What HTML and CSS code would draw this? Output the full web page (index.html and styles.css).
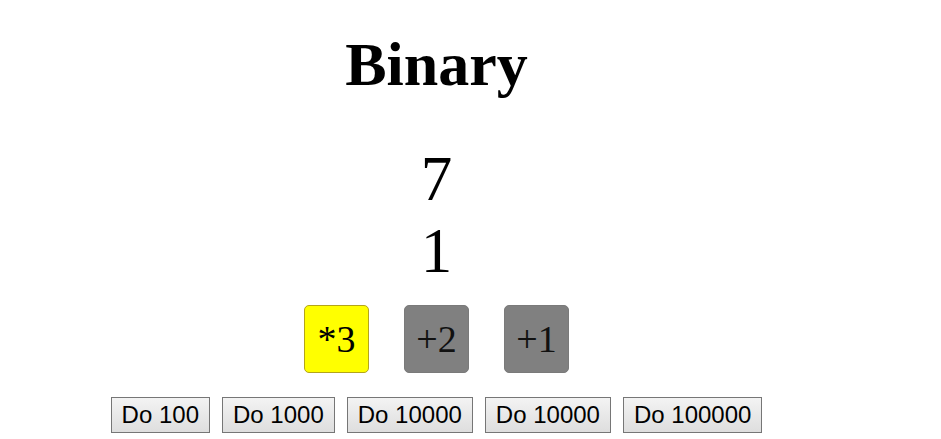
FILE: index.html
```html
<!DOCTYPE html>
<html>
<head>
<meta charset="utf-8">
<link rel="stylesheet" href="styles.css">
</head>
<body>
<div class="page">
  <h1 class="title">Binary</h1>
  <div class="numbers">
    <div class="num">7</div>
    <div class="num">1</div>
  </div>
  <div class="ops">
    <div class="op op-active">*3</div>
    <div class="op">+2</div>
    <div class="op">+1</div>
  </div>
  <div class="actions">
    <button class="btn">Do 100</button>
    <button class="btn">Do 1000</button>
    <button class="btn">Do 10000</button>
    <button class="btn">Do 10000</button>
    <button class="btn">Do 100000</button>
  </div>
</div>
</body>
</html>
```
FILE: styles.css
```css
html, body {
  margin: 0;
  padding: 0;
  background: #fff;
}
body {
  padding: 0 8px;
  font-family: "Liberation Serif", "Times New Roman", serif;
  color: #000;
}
.page {
  width: 857px;
  display: flex;
  flex-direction: column;
  align-items: center;
  padding-top: 29px;
}
.title {
  margin: 0;
  font-size: 62px;
  line-height: 70px;
  font-weight: bold;
}
.numbers {
  margin-top: 44px;
  display: flex;
  flex-direction: column;
  align-items: center;
}
.num {
  font-size: 63px;
  line-height: 72px;
}
.ops {
  margin-top: 18px;
  display: flex;
  gap: 35px;
}
.op {
  width: 65px;
  height: 68px;
  box-sizing: border-box;
  border-radius: 5px;
  background: #808080;
  border: 1px solid #7a7a7a;
  display: flex;
  align-items: center;
  justify-content: center;
  font-size: 38px;
  color: #111;
}
.op-active {
  background: #ffff00;
  border-color: #b3a51c;
  color: #000;
}
.actions {
  margin-top: 24px;
  display: flex;
  gap: 12px;
}
.btn {
  height: 36px;
  box-sizing: border-box;
  padding: 0 10px;
  margin: 0;
  font-family: "Liberation Sans", Arial, sans-serif;
  font-size: 24px;
  color: #000;
  border: 1px solid #767676;
  border-radius: 0;
  background: linear-gradient(#f3f3f3, #dedede);
}
```
